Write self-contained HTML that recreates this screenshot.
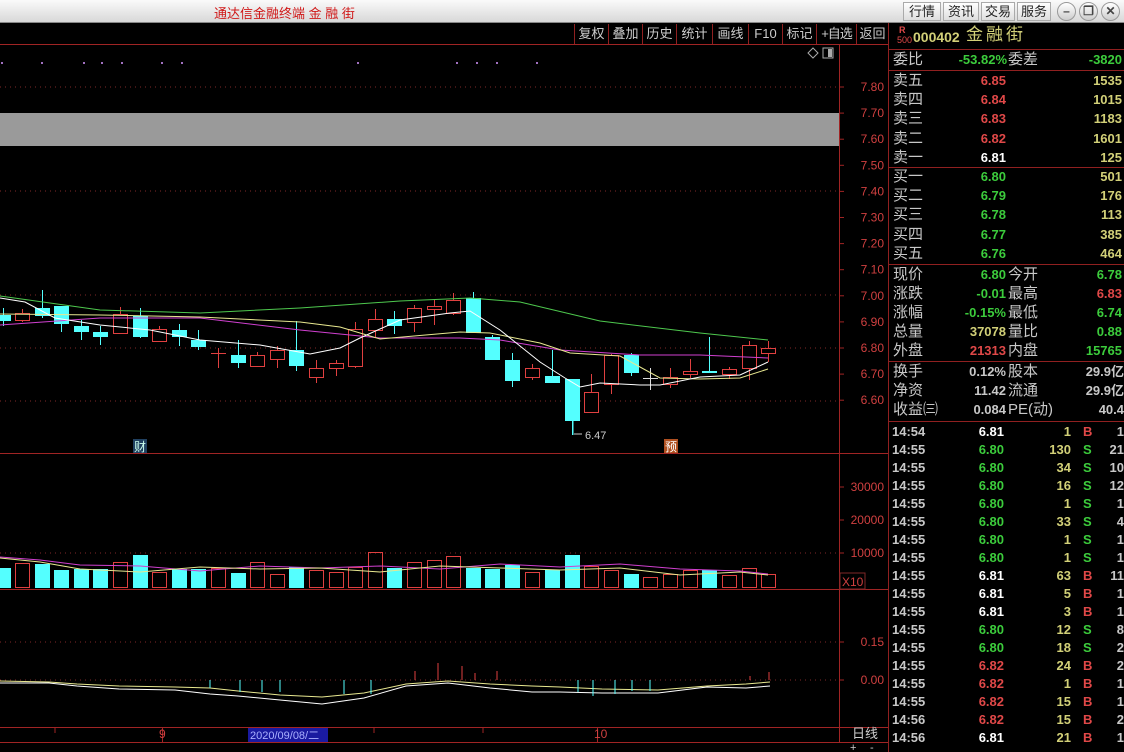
<!DOCTYPE html>
<html><head><meta charset="utf-8">
<style>
*{margin:0;padding:0;box-sizing:border-box}
body{width:1124px;height:752px;overflow:hidden;background:#000;font-family:"Liberation Sans","Noto Sans CJK SC",sans-serif;position:relative}
#title{position:absolute;left:0;top:0;width:1124px;height:23px;background:linear-gradient(#fafafa,#d8d8d8);border-bottom:1px solid #888}
#title .t{position:absolute;left:214px;top:3px;color:#d01818;font-size:13px;letter-spacing:0}
.tb{position:absolute;top:2px;height:19px;border:1px solid #aaa;background:linear-gradient(#fff,#ddd);font-size:13px;color:#222;text-align:center;line-height:17px}
.cb{position:absolute;top:2px;width:19px;height:19px;border-radius:50%;border:1px solid #999;background:linear-gradient(#fff,#ccc);font-size:12px;text-align:center;line-height:17px;color:#444;font-weight:bold}
.tool{position:absolute;top:24px;height:20px;border-left:1px solid #902020;color:#ccc;font-size:13px;text-align:center;line-height:20px}
.r{position:absolute;font-size:14px;white-space:nowrap;line-height:18px}
.lab{color:#c8c8c8;font-size:15px}
.n{font-weight:bold;font-size:13px;text-align:right}
.red{color:#e04848}.grn{color:#3ccc3c}.yel{color:#d2d078}.wht{color:#fff}.gry{color:#c8c8c8}
.hl{position:absolute;left:889px;width:235px;height:1px;background:#902020}
</style></head><body>
<div id="title"><span class="t">通达信金融终端 金 融 街</span>
<div class="tb" style="left:903px;width:38px">行情</div>
<div class="tb" style="left:943px;width:36px">资讯</div>
<div class="tb" style="left:981px;width:34px">交易</div>
<div class="tb" style="left:1017px;width:34px">服务</div>
<div class="cb" style="left:1057px">–</div>
<div class="cb" style="left:1079px">❐</div>
<div class="cb" style="left:1101px">✕</div>
</div>
<div class="tool" style="left:574px;width:34px">复权</div>
<div class="tool" style="left:608px;width:34px">叠加</div>
<div class="tool" style="left:642px;width:34px">历史</div>
<div class="tool" style="left:676px;width:36px">统计</div>
<div class="tool" style="left:712px;width:36px">画线</div>
<div class="tool" style="left:748px;width:34px">F10</div>
<div class="tool" style="left:782px;width:34px">标记</div>
<div class="tool" style="left:816px;width:40px;letter-spacing:-1px">+自选</div>
<div class="tool" style="left:856px;width:32px">返回</div>
<svg id="ch" width="889" height="752" style="position:absolute;left:0;top:0">
</svg>
<div style="position:absolute;left:888px;top:23px;width:1px;height:729px;background:#902020"></div>
<div class="r" style="left:899px;top:26px;font-size:9px;line-height:9px;color:#e04848;font-weight:bold">R</div>
<div class="r" style="left:897px;top:36px;font-size:9px;line-height:9px;color:#e04848">500</div>
<div class="r yel" style="left:913px;top:28px;font-size:14px;font-weight:bold">000402</div>
<div class="r yel" style="left:966px;top:26px;font-size:17px;letter-spacing:3px">金融街</div>
<div class="hl" style="top:49px"></div>
<div id="rp"></div>
<script>
var rp=document.getElementById('rp'),h='';
function R(x,y,t,c,al,w){h+='<div class="r '+c+'" style="'+(al?'left:'+(x-(w||100))+'px;width:'+(w||100)+'px;text-align:right;':'left:'+x+'px;')+'top:'+y+'px">'+t+'</div>';}
R(893,51,'委比','lab');R(1007,51,'-53.82%','n grn',1);R(1008,51,'委差','lab');R(1122,51,'-3820','n grn',1);
h+='<div class="hl" style="top:70px"></div>';
var s=[['卖五','6.85','1535','red'],['卖四','6.84','1015','red'],['卖三','6.83','1183','red'],['卖二','6.82','1601','red'],['卖一','6.81','125','wht']];
s.forEach(function(a,i){var y=72+i*19.2;R(893,y,a[0],'lab');R(1006,y,a[1],'n '+a[3],1);R(1122,y,a[2],'n yel',1)});
h+='<div class="hl" style="top:167px"></div>';
var b=[['买一','6.80','501'],['买二','6.79','176'],['买三','6.78','113'],['买四','6.77','385'],['买五','6.76','464']];
b.forEach(function(a,i){var y=168+i*19.2;R(893,y,a[0],'lab');R(1006,y,a[1],'n grn',1);R(1122,y,a[2],'n yel',1)});
h+='<div class="hl" style="top:264px"></div>';
var c=[['现价','6.80','grn','今开','6.78','grn'],['涨跌','-0.01','grn','最高','6.83','red'],['涨幅','-0.15%','grn','最低','6.74','grn'],['总量','37078','yel','量比','0.88','grn'],['外盘','21313','red','内盘','15765','grn']];
c.forEach(function(a,i){var y=266+i*19;R(893,y,a[0],'lab');R(1006,y,a[1],'n '+a[2],1);R(1008,y,a[3],'lab');R(1122,y,a[4],'n '+a[5],1)});
h+='<div class="hl" style="top:361px"></div>';
var d=[['换手','0.12%','股本','29.9亿'],['净资','11.42','流通','29.9亿'],['收益㈢','0.084','PE(动)','40.4']];
d.forEach(function(a,i){var y=363+i*19;R(893,y,a[0],'lab');R(1006,y,a[1],'n gry',1);R(1008,y,a[2],'lab');R(1124,y,a[3],'n gry',1)});
h+='<div class="hl" style="top:421px"></div>';
var t=[['14:54','6.81','wht','1','B'],['14:55','6.80','grn','130','S','21'],['14:55','6.80','grn','34','S','10'],['14:55','6.80','grn','16','S','12'],['14:55','6.80','grn','1','S','1'],['14:55','6.80','grn','33','S','4'],['14:55','6.80','grn','1','S','1'],['14:55','6.80','grn','1','S','1'],['14:55','6.81','wht','63','B','11'],['14:55','6.81','wht','5','B','1'],['14:55','6.81','wht','3','B','1'],['14:55','6.80','grn','12','S','8'],['14:55','6.80','grn','18','S','2'],['14:55','6.82','red','24','B','2'],['14:55','6.82','red','1','B','1'],['14:55','6.82','red','15','B','1'],['14:56','6.82','red','15','B','2'],['14:56','6.81','wht','21','B','1']];
t.forEach(function(a,i){var y=423+i*18;R(892,y,a[0],'n gry');R(1004,y,a[1],'n '+a[2],1);R(1071,y,a[3],'n yel',1);R(1083,y,a[4],'n '+(a[4]=='B'?'red':'grn'));R(1124,y,a[5]||'1','n gry',1,40)});
rp.innerHTML=h;

var g='';
function L(x1,y1,x2,y2,c,dash,w){g+='<line x1="'+x1+'" y1="'+y1+'" x2="'+x2+'" y2="'+y2+'" stroke="'+c+'" stroke-width="'+(w||1)+'"'+(dash?' stroke-dasharray="1 4"':'')+'/>';}
function T(x,y,s,c,sz,anch){g+='<text x="'+x+'" y="'+y+'" fill="'+c+'" font-size="'+(sz||12)+'" font-family="Liberation Sans,Noto Sans CJK SC,sans-serif"'+(anch?' text-anchor="'+anch+'"':'')+'>'+s+'</text>';}
var RC='#a02424';
L(0,44.5,889,44.5,RC);
g+='<rect x="0" y="113" width="839" height="33" fill="#9a9a9a"/>';
L(839.5,45,839.5,742,RC);
// price axis
var p=['7.80','7.70','7.60','7.50','7.40','7.30','7.20','7.10','7.00','6.90','6.80','6.70','6.60'];
p.forEach(function(v,i){var y=87+i*26.1;L(839,y,844,y,RC);T(884,y+4,v,'#d04040',12,'end');});
[87,191,295,348,401].forEach(function(y){L(0,y,839,y,'#802828',1)});
g=g.replace(/<line x1="0" y1="(87|191|295|348|401)"([^>]*)stroke-width="1"/g,'<line x1="0" y1="$1"$2stroke-width="1" stroke-dasharray="1 4"');
[0,40,82,100,120,160,180,356,455,475,495,535].forEach(function(x){g+='<rect x="'+(x+1)+'" y="62" width="2" height="2" fill="#a070c0"/>'});
g+='<path d="M813 48 L818 53 L813 58 L808 53Z" fill="none" stroke="#aaa"/><rect x="823" y="48" width="10" height="10" fill="none" stroke="#aaa"/><rect x="828" y="49" width="4" height="8" fill="#aaa"/>';
// panels
L(0,453.5,889,453.5,RC);L(0,589.5,889,589.5,RC);L(0,727.5,889,727.5,RC);L(0,742.5,889,742.5,RC);
[['30000',487],['20000',520],['10000',553]].forEach(function(a){L(839,a[1],844,a[1],RC);T(884,a[1]+4,a[0],'#d04040',12,'end')});
L(0,553,839,553,'#802828',1,0);g=g.replace(/y1="553" x2="839" y2="553" stroke="#802828" stroke-width="1"/,'y1="553" x2="839" y2="553" stroke="#802828" stroke-width="1" stroke-dasharray="1 4"');
g+='<rect x="840" y="573" width="25" height="16" fill="none" stroke="#802828"/>';T(842,586,'X10','#d04040',12);
[['0.15',642],['0.00',680]].forEach(function(a){L(839,a[1],844,a[1],RC);T(884,a[1]+4,a[0],'#d04040',12,'end');g+='<line x1="0" y1="'+a[1]+'" x2="839" y2="'+a[1]+'" stroke="#802828" stroke-dasharray="1 4"/>'});
// candles
var C=[[3,315,321,308,326,'c'],[22,313,320,309,322,'r'],[42,308,316,290,318,'c'],[61,306,324,306,332,'c'],[81,326,332,320,340,'c'],[100,332,337,326,345,'c'],[120,314,333,307,333,'r'],[140,316,337,308,338,'c'],[159,329,341,326,341,'r'],[179,330,337,324,346,'c'],[198,340,347,330,350,'c'],[218,353,355,348,368,'r'],[238,355,363,340,368,'c'],[257,355,366,352,367,'r'],[277,350,359,346,368,'r'],[296,350,366,321,371,'c'],[316,368,377,360,383,'r'],[336,363,368,360,376,'r'],[355,329,366,322,368,'r'],[375,319,330,309,338,'r'],[394,319,326,311,334,'c'],[414,308,322,305,332,'r'],[434,306,309,300,325,'r'],[453,300,313,293,315,'r'],[473,298,333,292,333,'c'],[492,337,360,335,360,'c'],[512,360,381,353,387,'c'],[532,368,377,364,380,'r'],[552,376,383,350,383,'c'],[572,379,421,379,435,'c'],[591,392,412,374,412,'r'],[611,355,384,354,394,'r'],[631,355,373,353,376,'c'],[650,378,379,368,390,'w'],[670,377,384,368,388,'r'],[690,371,374,359,378,'r'],[709,371,373,337,373,'c'],[729,369,374,367,379,'r'],[749,345,368,341,380,'r'],[768,348,353,341,362,'r']];
var V=[568,563,564,570,569,569,562,555,572,569,569,568,573,562,574,567,570,572,567,552,568,562,560,556,568,569,565,572,570,555,566,570,574,577,574,570,570,575,568,574];
C.forEach(function(a,i){var x=a[0],col=a[5]=='c'?'#54ffff':(a[5]=='w'?'#ddd':'#e04040');
L(x+.5,a[3],x+.5,a[4],col);
if(a[5]=='c')g+='<rect x="'+(x-7)+'" y="'+a[1]+'" width="15" height="'+Math.max(2,a[2]-a[1])+'" fill="#54ffff"/>';
else if(a[2]-a[1]<3)L(x-7,a[1]+.5,x+8,a[1]+.5,col);
else g+='<rect x="'+(x-6.5)+'" y="'+(a[1]+.5)+'" width="14" height="'+(a[2]-a[1])+'" fill="#000" stroke="'+col+'"/>';
var vt=V[i];if(a[5]=='c')g+='<rect x="'+(x-7)+'" y="'+vt+'" width="15" height="'+(588-vt)+'" fill="#54ffff"/>';else g+='<rect x="'+(x-6.5)+'" y="'+(vt+.5)+'" width="14" height="'+(587-vt)+'" fill="none" stroke="#e04040"/>';
});
function P(pts,c){g+='<polyline fill="none" stroke="'+c+'" points="'+pts+'"/>';}
P('0,296 100,310 200,313 300,308 400,301 470,298 520,302 600,321 700,333 768,340','#4ec84e');
P('0,325 100,318 200,318 300,330 380,338 460,338 500,340 560,350 640,355 700,355 768,358','#d040d0');
P('0,314 100,315 200,317 300,322 340,327 380,339 460,332 490,333 540,343 570,353 620,356 660,378 700,379 740,378 768,369','#e8e890');
P('0,298 25,302 55,318 100,325 150,330 200,340 260,345 310,354 340,348 360,338 400,320 450,313 470,311 500,330 540,362 565,378 580,387 600,383 640,385 660,385 700,377 740,375 768,362','#fff');
P('0,557 40,560 80,565 140,566 200,571 260,566 320,568 380,566 440,569 500,564 560,567 620,564 680,569 740,571 768,574','#d040d0');
P('0,558 40,562 80,569 140,572 200,567 260,569 320,568 380,572 440,566 500,568 560,570 620,568 680,575 740,572 768,575','#e8e890');
L(573,421,573,435,'#54ffff');T(585,439,'6.47','#ccc',11);L(574,434,582,434,'#ccc');
g+='<rect x="133" y="439" width="14" height="14" fill="#204060"/>';T(134,451,'财','#cfe',12);
g+='<rect x="664" y="439" width="14" height="14" fill="#b05020"/>';T(665,451,'预','#fff',12);
// indicator
P('0,682 60,682 100,685 160,687 220,688 280,690 340,693 420,698 500,698 560,694 600,690 660,684 700,680 760,681 820,682 840,683','none');
P('0,680 60,681 100,684 160,685 220,686 280,686 340,688 420,691 500,692 580,686 640,683 700,681 740,681 800,682 840,685','none');
P('0,683 70,683 110,686 170,688 250,690 300,692 340,695 400,700 460,704 520,700 580,692 640,688 700,687 760,691 840,688','none');
P('0,680 70,681 110,684 170,686 250,688 300,688 340,691 400,696 460,697 520,694 580,686 640,683 700,684 760,686 840,685','none');
var W=[[0,683],[70,683],[110,686],[170,689],[250,690],[300,694],[340,696],[400,700],[460,704],[520,698],[580,686],[640,683],[700,688],[760,692],[800,692],[860,693],[940,693],[1010,687],[1066,688],[1100,686]];
var Y=[[0,681],[70,682],[110,684],[170,686],[250,687],[300,688],[340,691],[400,695],[460,697],[520,693],[580,684],[640,681],[700,684],[760,686],[800,687],[860,689],[940,690],[1010,686],[1066,684],[1100,682]];
function sc(a){return a.map(function(p){return (p[0]*0.7).toFixed(0)+','+p[1]}).join(' ')}
g=g.replace(/<polyline fill="none" stroke="none"[^>]*\/>/g,'');
P(sc(W),'#fff');P(sc(Y),'#e8e890');
[[462,666],[475,673],[497,671],[438,663],[415,671],[750,676],[769,672]].forEach(function(a){L(a[0],a[1],a[0],680,'#e04040')});
[[210,684],[240,688],[262,688],[280,688],[344,690],[371,690],[578,688],[593,692],[615,690],[632,687],[650,687]].forEach(function(a){L(a[0],680,a[0],a[1]+4,'#54ffff')});
// bottom axis
L(55,728,55,733,RC);L(162.5,728,162.5,742,RC);T(159,738,'9','#d04040',12);
g+='<rect x="248" y="728" width="80" height="14" fill="#1a1aa0"/>';T(250,739,'2020/09/08/二','#aab0ff',11);
L(597.5,728,597.5,742,RC);T(594,738,'10','#d04040',12);
L(374,728,374,733,RC);L(483,728,483,733,RC);
T(852,738,'日线','#ccc',13);T(850,751,'+','#ccc',11);T(870,751,'-','#ccc',11);
document.getElementById('ch').innerHTML=g;
</script>
</body></html>
